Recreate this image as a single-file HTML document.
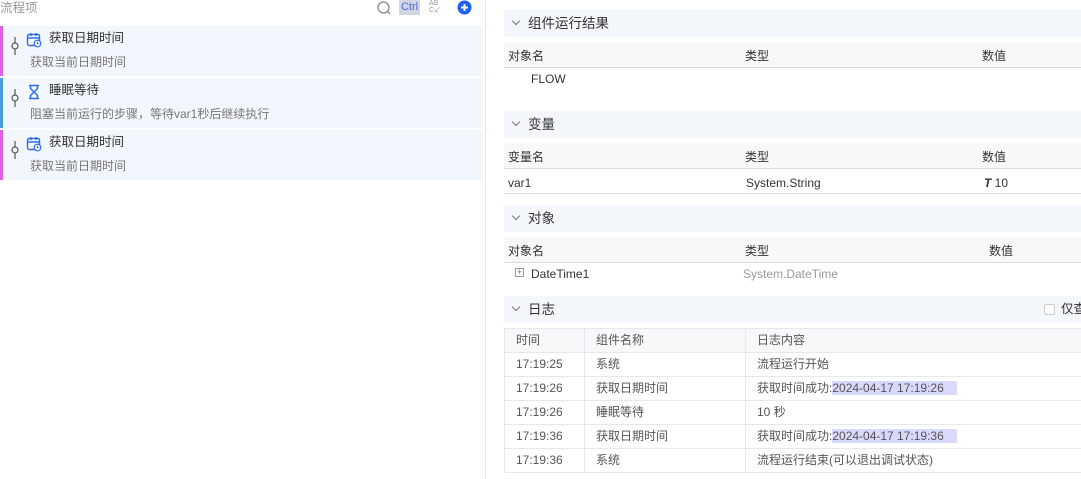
<!DOCTYPE html>
<html><head><meta charset="utf-8"><style>
*{margin:0;padding:0;box-sizing:border-box}
body{width:1081px;height:479px;overflow:hidden;background:#fff;font-family:"Liberation Sans","Noto Sans CJK SC",sans-serif;font-size:12px;line-height:1.2;color:#333;position:relative}
.a{position:absolute;white-space:nowrap}
.item{position:absolute;left:0;width:483px;height:50px;background:#f2f6fd;border-left:3px solid #dd60e3}
.item .t{position:absolute;left:46px;top:5px;font-size:12.5px;color:#333}
.item .d{position:absolute;left:27px;top:29px;color:#777}
.item .ic{position:absolute;left:23px;top:6px}
.item .pin{position:absolute;left:7px;top:9px}
.sh{position:absolute;left:504px;width:577px;height:27px;background:#f3f6fa}
.sh span{position:absolute;left:24px;top:0;line-height:27px;font-size:13.5px;color:#333}
.sh i{position:absolute;left:9px;top:8px;width:6px;height:6px;border-right:1px solid #777;border-bottom:1px solid #777;transform:rotate(45deg)}
.th{position:absolute;left:504px;width:577px;height:26px;background:#f7f8fa;border-bottom:1px solid #ddd}
.th span,.row span{position:absolute;top:7px}
.row{position:absolute;left:504px;width:577px;height:25px;border-bottom:1px solid #ddd}
.log{position:absolute;left:504px;top:328px;border-collapse:collapse;width:580px;color:#555}
.log td{height:24px;border:1px solid #e6e8ee;padding-left:11px}
.log tr:first-child td{background:#f7f8fa}
.hl{background:#d9d8fd}
</style></head><body>
<div class="a" style="left:0;top:1px;color:#999;font-size:12.5px">流程项</div>
<svg class="a" style="left:376px;top:0" width="16" height="16"><circle cx="7.5" cy="7.5" r="5.5" fill="none" stroke="#888" stroke-width="1.3"/><line x1="11.5" y1="11.5" x2="14" y2="14" stroke="#888" stroke-width="1.3"/></svg>
<div class="a" style="left:399px;top:0;width:21px;height:15px;background:#d2d6e2;color:#4a6ad8;font-size:11px;line-height:15px;text-align:center">Ctrl</div>
<div class="a" style="left:429px;top:0;font-size:7px;color:#999;line-height:7px">AB<br>C↙</div>
<svg class="a" style="left:457px;top:0" width="15" height="15"><circle cx="7.5" cy="7.5" r="7" fill="#1d5ff0"/><path d="M4 7.5h7M7.5 4v7" stroke="#fff" stroke-width="2"/></svg>
<div class="a" style="left:485px;top:0;width:1px;height:479px;background:#e6e8ec"></div>

<svg width="0" height="0" style="position:absolute"><defs>
<symbol id="cal" viewBox="0 0 16 16"><rect x="1.5" y="2.5" width="12" height="11" rx="1.5" fill="none" stroke="#2b6ee8" stroke-width="1.4"/><path d="M1.5 6h12M5 1v3M10 1v3" stroke="#2b6ee8" stroke-width="1.4"/><circle cx="11.5" cy="11.5" r="3.3" fill="#fff" stroke="#2b6ee8" stroke-width="1.2"/><path d="M11.5 9.8v1.8h1.4" stroke="#2b6ee8" fill="none"/></symbol>
<symbol id="pin" viewBox="0 0 10 22"><path d="M5 2v6M5 14v6" stroke="#555" stroke-width="1.2"/><circle cx="5" cy="11" r="3" fill="none" stroke="#555" stroke-width="1.2"/></symbol>
</defs></svg>

<div class="item" style="top:26px"><svg class="pin" width="10" height="22"><use href="#pin"/></svg><svg class="ic" width="16" height="16"><use href="#cal"/></svg><div class="t">获取日期时间</div><div class="d">获取当前日期时间</div></div>
<div class="item" style="top:78px;border-left-color:#4a9be0"><svg class="pin" width="10" height="22"><use href="#pin"/></svg><svg class="ic" width="16" height="16" viewBox="0 0 16 16"><path d="M3 1.5h10M3 14.5h10M4.5 2v2.5L8 8l3.5-3.5V2M4.5 14v-2.5L8 8l3.5 3.5V14" fill="none" stroke="#2b6ee8" stroke-width="1.5"/></svg><div class="t">睡眠等待</div><div class="d">阻塞当前运行的步骤，等待var1秒后继续执行</div></div>
<div class="item" style="top:130px"><svg class="pin" width="10" height="22"><use href="#pin"/></svg><svg class="ic" width="16" height="16"><use href="#cal"/></svg><div class="t">获取日期时间</div><div class="d">获取当前日期时间</div></div>

<div class="sh" style="top:10px"><i></i><span>组件运行结果</span></div>
<div class="th" style="top:42px"><span style="left:4px">对象名</span><span style="left:241px">类型</span><span style="left:478px">数值</span></div>
<div class="a" style="left:531px;top:72px">FLOW</div>

<div class="sh" style="top:111px"><i></i><span>变量</span></div>
<div class="th" style="top:143px"><span style="left:4px">变量名</span><span style="left:241px">类型</span><span style="left:478px">数值</span></div>
<div class="row" style="top:169px"><span style="left:4px">var1</span><span style="left:242px">System.String</span><span style="left:480px"><b><i>T</i></b> 10</span></div>

<div class="sh" style="top:205px"><i></i><span>对象</span></div>
<div class="th" style="top:237px"><span style="left:4px">对象名</span><span style="left:241px">类型</span><span style="left:485px">数值</span></div>
<div class="a" style="left:515px;top:268px;width:9px;height:9px;border:1px solid #999;font-size:9px;line-height:7px;text-align:center;color:#777">+</div>
<div class="a" style="left:531px;top:267px">DateTime1</div>
<div class="a" style="left:743px;top:267px;color:#999">System.DateTime</div>

<div class="sh" style="top:296px"><i></i><span>日志</span></div>
<div class="a" style="left:1044px;top:304px;width:11px;height:11px;border:1px solid #ccc;border-radius:2px;background:#fff"></div>
<div class="a" style="left:1061px;top:302px;font-size:12.5px">仅查</div>
<table class="log">
<tr><td style="width:80px">时间</td><td style="width:161px">组件名称</td><td>日志内容</td></tr>
<tr><td>17:19:25</td><td>系统</td><td>流程运行开始</td></tr>
<tr><td>17:19:26</td><td>获取日期时间</td><td>获取时间成功:<span class="hl">2024-04-17 17:19:26&nbsp;&nbsp;&nbsp;&nbsp;</span></td></tr>
<tr><td>17:19:26</td><td>睡眠等待</td><td>10 秒</td></tr>
<tr><td>17:19:36</td><td>获取日期时间</td><td>获取时间成功:<span class="hl">2024-04-17 17:19:36&nbsp;&nbsp;&nbsp;&nbsp;</span></td></tr>
<tr><td>17:19:36</td><td>系统</td><td>流程运行结束(可以退出调试状态)</td></tr>
</table>
</body></html>
